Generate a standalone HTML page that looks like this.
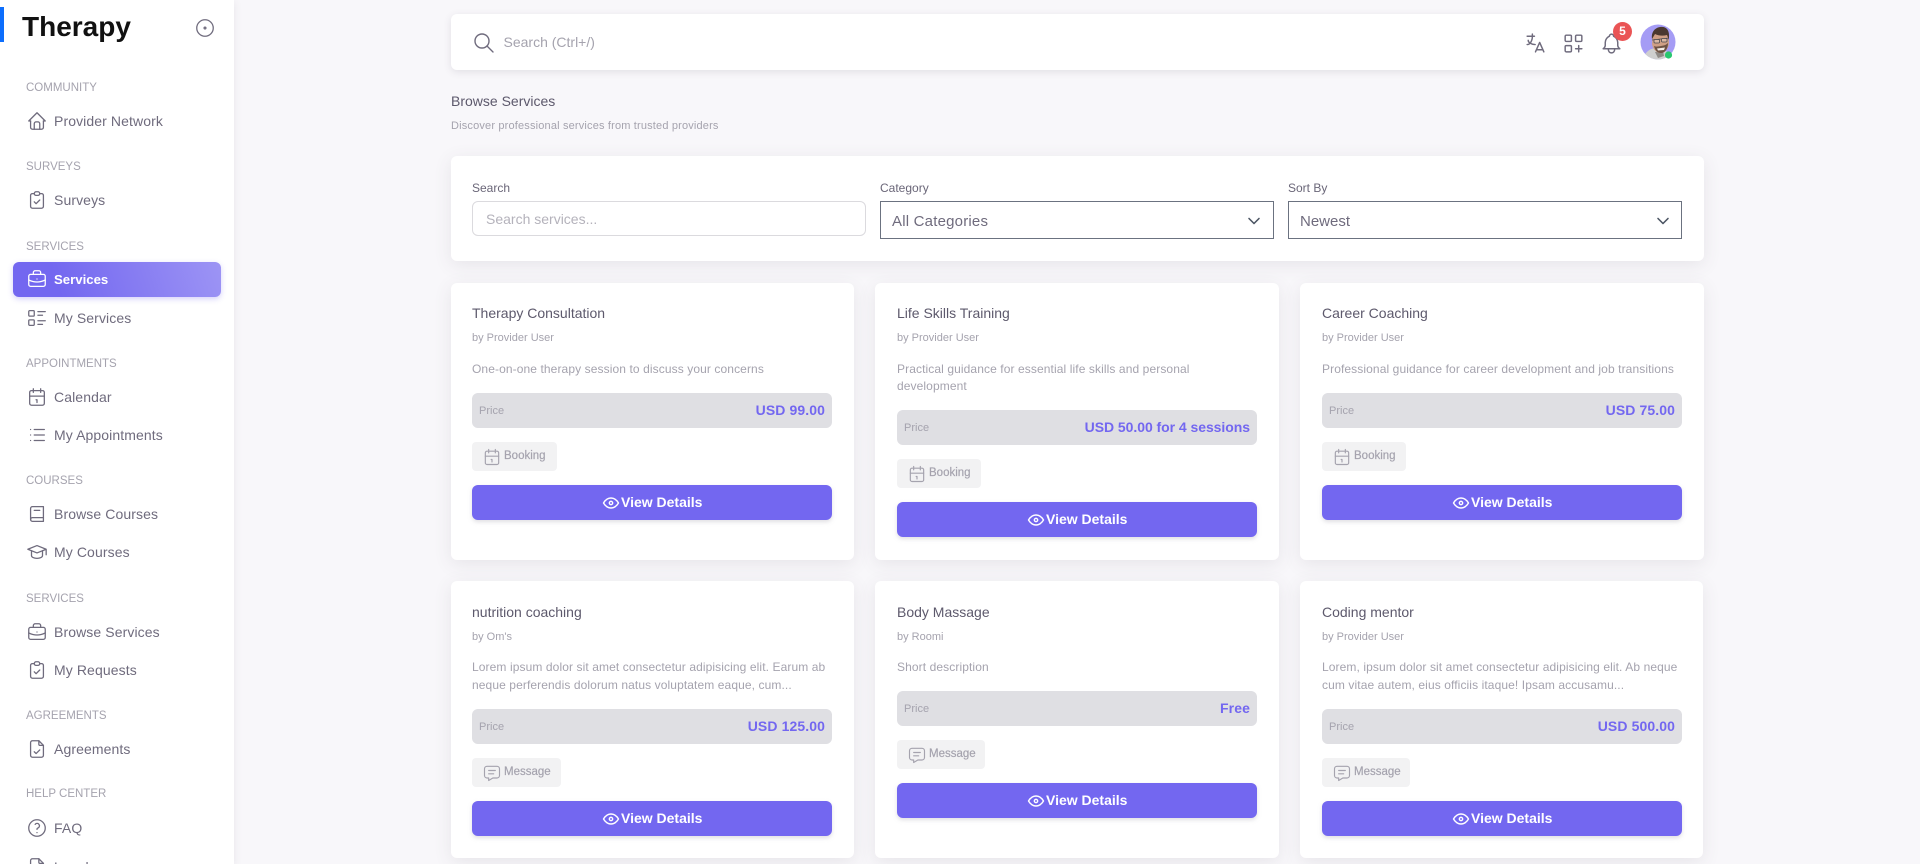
<!DOCTYPE html>
<html lang="en"><head><meta charset="utf-8"><title>Browse Services</title>
<style>
*{box-sizing:border-box}
html,body{margin:0;padding:0;width:1920px;height:864px;overflow:hidden;background:#f8f7fa;font-family:"Liberation Sans",sans-serif;color:#6f6b7d}
.a{position:absolute;white-space:nowrap;line-height:18px}
svg.i{position:absolute;fill:none;stroke:currentColor;stroke-width:1.4;stroke-linecap:round;stroke-linejoin:round}
#side{position:absolute;left:0;top:0;width:234px;height:864px;background:#fff;box-shadow:0 2px 8px rgba(75,70,92,.1);overflow:hidden}
.sec{left:26px;font-size:11.5px;color:#a5a3ae}
.nav{left:54px;font-size:14px;letter-spacing:.1px;color:#6f6b7d}
.box{position:absolute;background:#fff;border-radius:6px;box-shadow:0 4px 18px rgba(75,70,92,.1)}
.card{position:absolute;background:#fff;border-radius:6px;box-shadow:0 4px 18px rgba(75,70,92,.1);height:277px}
.tt{left:21px;top:21px;font-size:14px;color:#5d596c}
.by{left:21px;top:46px;font-size:11px;color:#a5a3ae}
.ds{left:21px;font-size:12px;letter-spacing:.1px;color:#a5a3ae}
.pr{position:absolute;left:21px;width:360px;height:35px;background:#dfdfe3;border-radius:6px}
.pr b{position:absolute;right:7px;top:8px;font-size:14px;line-height:18px;letter-spacing:.1px;color:#7367f0;white-space:nowrap}
.pr span{position:absolute;left:7px;top:9px;font-size:11px;line-height:18px;color:#a5a3ae}
.bd{position:absolute;left:21px;height:29px;background:#f2f2f3;border-radius:4px;color:#a5a3ae}
.bd span{position:absolute;left:32px;top:5px;font-size:11.5px;line-height:18px;white-space:nowrap;-webkit-text-stroke:.2px #a5a3ae}
.bd svg{left:10px;top:5px;width:20px;height:20px}
.btn{position:absolute;left:21px;width:360px;height:35px;background:#7367f0;border-radius:6px;box-shadow:0 2px 4px rgba(165,163,174,.35);color:#fff}
.btn svg{left:129px;top:8px;width:20px;height:20px;stroke-width:1.7}
.btn b{position:absolute;left:149px;top:8px;font-size:14px;line-height:18px;white-space:nowrap}
</style></head><body>
<svg width="0" height="0" style="position:absolute">
<symbol id="home" viewBox="0 0 24 24"><path d="M5 12h-2l9-9 9 9h-2"/><path d="M5 12v7a2 2 0 0 0 2 2h10a2 2 0 0 0 2-2v-7"/><path d="M9 21v-6a2 2 0 0 1 2-2h2a2 2 0 0 1 2 2v6"/></symbol>
<symbol id="clip" viewBox="0 0 24 24"><path d="M9 5h-2a2 2 0 0 0-2 2v12a2 2 0 0 0 2 2h10a2 2 0 0 0 2-2v-12a2 2 0 0 0-2-2h-2"/><path d="M9 5a2 2 0 0 1 2-2h2a2 2 0 0 1 2 2a2 2 0 0 1-2 2h-2a2 2 0 0 1-2-2z"/><path d="M9 14l2 2l4-4"/></symbol>
<symbol id="brief" viewBox="0 0 24 24"><path d="M3 9a2 2 0 0 1 2-2h14a2 2 0 0 1 2 2v9a2 2 0 0 1-2 2h-14a2 2 0 0 1-2-2z"/><path d="M8 7v-2a2 2 0 0 1 2-2h4a2 2 0 0 1 2 2v2"/><path d="M12 12v.01"/><path d="M3 13a20 20 0 0 0 18 0"/></symbol>
<symbol id="listd" viewBox="0 0 24 24"><path d="M13 5h8M13 9h5M13 15h8M13 19h5"/><path d="M3 5a1 1 0 0 1 1-1h4a1 1 0 0 1 1 1v4a1 1 0 0 1-1 1h-4a1 1 0 0 1-1-1z"/><path d="M3 15a1 1 0 0 1 1-1h4a1 1 0 0 1 1 1v4a1 1 0 0 1-1 1h-4a1 1 0 0 1-1-1z"/></symbol>
<symbol id="cal" viewBox="0 0 24 24"><path d="M4 7a2 2 0 0 1 2-2h12a2 2 0 0 1 2 2v12a2 2 0 0 1-2 2h-12a2 2 0 0 1-2-2z"/><path d="M16 3v4M8 3v4M4 11h16M11 15h1M12 15v3"/></symbol>
<symbol id="list" viewBox="0 0 24 24"><path d="M9 6h11M9 12h11M9 18h11M5 6v.01M5 12v.01M5 18v.01"/></symbol>
<symbol id="book" viewBox="0 0 24 24"><path d="M19 4v16h-12a2 2 0 0 1-2-2v-12a2 2 0 0 1 2-2h12z"/><path d="M19 16h-12a2 2 0 0 0-2 2"/><path d="M9 8h6"/></symbol>
<symbol id="school" viewBox="0 0 24 24"><path d="M22 9l-10-4l-10 4l10 4l10-4v6"/><path d="M6 10.6v5.4a6 3 0 0 0 12 0v-5.4"/></symbol>
<symbol id="fcheck" viewBox="0 0 24 24"><path d="M14 3v4a1 1 0 0 0 1 1h4"/><path d="M17 21h-10a2 2 0 0 1-2-2v-14a2 2 0 0 1 2-2h7l5 5v11a2 2 0 0 1-2 2z"/><path d="M9 15l2 2l4-4"/></symbol>
<symbol id="help" viewBox="0 0 24 24"><circle cx="12" cy="12" r="9"/><path d="M12 17v.01"/><path d="M12 13.5a1.5 1.5 0 0 1 1-1.5a2.6 2.6 0 1 0-3-4"/></symbol>
<symbol id="eye" viewBox="0 0 24 24"><path d="M10 12a2 2 0 1 0 4 0a2 2 0 0 0-4 0"/><path d="M21 12c-2.4 4-5.4 6-9 6c-3.6 0-6.6-2-9-6c2.4-4 5.4-6 9-6c3.6 0 6.6 2 9 6"/></symbol>
<symbol id="msg" viewBox="0 0 24 24"><path d="M8 9h8M8 13h6"/><path d="M18 4a3 3 0 0 1 3 3v8a3 3 0 0 1-3 3h-5l-5 3v-3h-2a3 3 0 0 1-3-3v-8a3 3 0 0 1 3-3h12z"/></symbol>
<symbol id="chev" viewBox="0 0 24 24"><path d="M6 9l6 6l6-6"/></symbol>
</svg>

<div id="side">
<div style="position:absolute;left:0;top:7px;width:4px;height:35px;background:#0d6efd"></div>
<div class="a" style="left:22px;top:11px;font-size:28px;line-height:32px;font-weight:700;color:#111">Therapy</div>
<svg class="i" style="left:193.5px;top:17px;width:22px;height:22px" viewBox="0 0 24 24"><circle cx="12" cy="12" r="1"/><circle cx="12" cy="12" r="9"/></svg>

<div class="a sec" style="top:79px">COMMUNITY</div>
<svg class="i" style="left:26px;top:110px;width:22px;height:22px"><use href="#home"/></svg><div class="a nav" style="top:112px">Provider Network</div>
<div class="a sec" style="top:158px">SURVEYS</div>
<svg class="i" style="left:26px;top:189px;width:22px;height:22px"><use href="#clip"/></svg><div class="a nav" style="top:191px">Surveys</div>
<div class="a sec" style="top:238px">SERVICES</div>
<div style="position:absolute;left:13px;top:262px;width:208px;height:35px;border-radius:6px;background:linear-gradient(72deg,#7367f0 22%,rgba(115,103,240,.7) 100%);box-shadow:0 2px 6px rgba(115,103,240,.3)"></div>
<svg class="i" style="left:26px;top:268px;width:22px;height:22px;color:#fff"><use href="#brief"/></svg><div class="a" style="left:54px;top:271px;font-size:13.2px;font-weight:700;color:#fff">Services</div>
<svg class="i" style="left:26px;top:307px;width:22px;height:22px"><use href="#listd"/></svg><div class="a nav" style="top:309px">My Services</div>
<div class="a sec" style="top:355px">APPOINTMENTS</div>
<svg class="i" style="left:26px;top:386px;width:22px;height:22px"><use href="#cal"/></svg><div class="a nav" style="top:388px">Calendar</div>
<svg class="i" style="left:26px;top:424px;width:22px;height:22px"><use href="#list"/></svg><div class="a nav" style="top:426px">My Appointments</div>
<div class="a sec" style="top:472px">COURSES</div>
<svg class="i" style="left:26px;top:503px;width:22px;height:22px"><use href="#book"/></svg><div class="a nav" style="top:505px">Browse Courses</div>
<svg class="i" style="left:26px;top:541px;width:22px;height:22px"><use href="#school"/></svg><div class="a nav" style="top:543px">My Courses</div>
<div class="a sec" style="top:590px">SERVICES</div>
<svg class="i" style="left:26px;top:621px;width:22px;height:22px"><use href="#brief"/></svg><div class="a nav" style="top:623px">Browse Services</div>
<svg class="i" style="left:26px;top:659px;width:22px;height:22px"><use href="#clip"/></svg><div class="a nav" style="top:661px">My Requests</div>
<div class="a sec" style="top:707px">AGREEMENTS</div>
<svg class="i" style="left:26px;top:738px;width:22px;height:22px"><use href="#fcheck"/></svg><div class="a nav" style="top:740px">Agreements</div>
<div class="a sec" style="top:785px">HELP CENTER</div>
<svg class="i" style="left:26px;top:817px;width:22px;height:22px"><use href="#help"/></svg><div class="a nav" style="top:819px">FAQ</div>
<svg class="i" style="left:26px;top:856px;width:22px;height:22px"><use href="#fcheck"/></svg><div class="a nav" style="top:858px">Legal</div>
</div>

<div class="box" style="left:451px;top:14px;width:1253px;height:56px;box-shadow:0 2px 8px rgba(75,70,92,.13)"></div>
<svg class="i" style="left:472px;top:31px;width:24px;height:24px" viewBox="0 0 24 24"><circle cx="10" cy="10" r="7"/><path d="M21 21l-6-6"/></svg>
<div class="a" style="left:503.5px;top:33px;font-size:14px;color:#a5a3ae">Search (Ctrl+/)</div>
<svg class="i" style="left:1523px;top:31px;width:25px;height:25px" viewBox="0 0 24 24"><path d="M4 5h7M9 3v2c0 4.418-2.239 8-5 8"/><path d="M5 9c0 2.144 2.952 3.908 6.7 4"/><path d="M12 20l4-9l4 9M19.1 18h-6.2"/></svg>
<svg class="i" style="left:1561px;top:31px;width:25px;height:25px" viewBox="0 0 24 24"><rect x="4" y="4" width="6" height="6" rx="1"/><rect x="14" y="4" width="6" height="6" rx="1"/><rect x="4" y="14" width="6" height="6" rx="1"/><path d="M14 17h6m-3-3v6"/></svg>
<svg class="i" style="left:1599px;top:31px;width:25px;height:25px" viewBox="0 0 24 24"><path d="M10 5a2 2 0 1 1 4 0a7 7 0 0 1 4 6v3a4 4 0 0 0 2 3h-16a4 4 0 0 0 2-3v-3a7 7 0 0 1 4-6"/><path d="M9 17v1a3 3 0 0 0 6 0v-1"/></svg>
<div style="position:absolute;left:1613px;top:22px;width:19px;height:19px;border-radius:50%;background:#ea5455;color:#fff;font-size:12px;font-weight:700;line-height:19px;text-align:center">5</div>
<svg style="position:absolute;left:1640px;top:24px" width="36" height="36" viewBox="0 0 36 36">
<defs><clipPath id="av"><circle cx="18" cy="18" r="17.5"/></clipPath></defs>
<g clip-path="url(#av)"><rect width="36" height="36" fill="#a59cf5"/>
<path d="M3 36c1-7 6-11 12-12l9 2c4 2 7 5 8 10z" fill="#cfcfcf"/>
<path d="M15 28l8-1 1 5-6 2z" fill="#8f8a86"/>
<path d="M13 8c4-4 13-4 15 2l1 8c0 6-4 11-8 11s-8-3-9-9z" fill="#cf9f85"/>
<path d="M12 15c-1-6 2-11 8-12s9 3 9 8l0 5-2-5c-4 1-8 1-12-1z" fill="#4a3830"/>
<path d="M14 22c2 1 4 .5 7 0s5-1 7-3c0 6-3 10-7 10s-6-3-7-7z" fill="#6d5345"/>
<path d="M17 24.5l8-1-1 2.5-6 .5z" fill="#f4ece6"/>
<path d="M12 16l17-2" stroke="#4a4a50" stroke-width=".8"/><rect x="14" y="15.5" width="5.5" height="3.5" rx="1" fill="#d9b8a4" stroke="#4a4a50" stroke-width=".8"/><rect x="21.5" y="14.5" width="5.5" height="3.5" rx="1" fill="#d9b8a4" stroke="#4a4a50" stroke-width=".8"/></g>
<circle cx="28.5" cy="31" r="3.6" fill="#28c76f"/></svg>

<div class="a" style="left:451px;top:92px;font-size:14px;color:#5d596c">Browse Services</div>
<div class="a" style="left:451px;top:117px;font-size:11px;letter-spacing:.17px;color:#a5a3ae">Discover professional services from trusted providers</div>

<div class="box" style="left:451px;top:156px;width:1253px;height:105px"></div>
<div class="a" style="left:472px;top:179px;font-size:12px;color:#6a6678">Search</div>
<div style="position:absolute;left:472px;top:201px;width:394px;height:35px;border:1px solid #dbdade;border-radius:6px;background:#fff"></div>
<div class="a" style="left:486px;top:210px;font-size:14px;color:#b4b2bb">Search services...</div>
<div class="a" style="left:880px;top:179px;font-size:12px;color:#6a6678">Category</div>
<div style="position:absolute;left:880px;top:201px;width:394px;height:38px;border:1px solid #6b7280;background:#fff"></div>
<div class="a" style="left:892px;top:213px;font-size:15px;letter-spacing:.2px;color:#6f6b7d">All Categories</div>
<svg class="i" style="left:1244px;top:211px;width:20px;height:20px;color:#4b5563;stroke-width:1.9"><use href="#chev"/></svg>
<div class="a" style="left:1288px;top:179px;font-size:12px;color:#6a6678">Sort By</div>
<div style="position:absolute;left:1288px;top:201px;width:394px;height:38px;border:1px solid #6b7280;background:#fff"></div>
<div class="a" style="left:1300px;top:213px;font-size:15px;color:#6f6b7d">Newest</div>
<svg class="i" style="left:1653px;top:211px;width:20px;height:20px;color:#4b5563;stroke-width:1.9"><use href="#chev"/></svg>

<!-- Row 1 -->
<div class="card" style="left:451px;top:283px;width:403px">
<div class="a tt">Therapy Consultation</div><div class="a by">by Provider User</div>
<div class="a ds" style="top:77px">One-on-one therapy session to discuss your concerns</div>
<div class="pr" style="top:110px"><span>Price</span><b>USD 99.00</b></div>
<div class="bd" style="top:159px;width:85px"><svg class="i"><use href="#cal"/></svg><span>Booking</span></div>
<div class="btn" style="top:202px"><svg class="i"><use href="#eye"/></svg><b>View Details</b></div>
</div>
<div class="card" style="left:875px;top:283px;width:404px">
<div class="a tt" style="left:22px">Life Skills Training</div><div class="a by" style="left:22px">by Provider User</div>
<div class="a ds" style="left:22px;top:77px">Practical guidance for essential life skills and personal</div>
<div class="a ds" style="left:22px;top:94px">development</div>
<div class="pr" style="left:22px;top:127px"><span>Price</span><b style="letter-spacing:-.05px">USD 50.00 for 4 sessions</b></div>
<div class="bd" style="left:22px;top:176px;width:84px"><svg class="i"><use href="#cal"/></svg><span>Booking</span></div>
<div class="btn" style="left:22px;top:219px"><svg class="i"><use href="#eye"/></svg><b>View Details</b></div>
</div>
<div class="card" style="left:1300px;top:283px;width:404px">
<div class="a tt" style="left:22px">Career Coaching</div><div class="a by" style="left:22px">by Provider User</div>
<div class="a ds" style="left:22px;top:77px">Professional guidance for career development and job transitions</div>
<div class="pr" style="left:22px;top:110px"><span>Price</span><b>USD 75.00</b></div>
<div class="bd" style="left:22px;top:159px;width:84px"><svg class="i"><use href="#cal"/></svg><span>Booking</span></div>
<div class="btn" style="left:22px;top:202px"><svg class="i"><use href="#eye"/></svg><b>View Details</b></div>
</div>

<!-- Row 2 -->
<div class="card" style="left:451px;top:581px;width:403px">
<div class="a tt" style="top:22px">nutrition coaching</div><div class="a by" style="top:47px">by Om's</div>
<div class="a ds" style="top:77px">Lorem ipsum dolor sit amet consectetur adipisicing elit. Earum ab</div>
<div class="a ds" style="top:95px">neque perferendis dolorum natus voluptatem eaque, cum...</div>
<div class="pr" style="top:128px"><span>Price</span><b>USD 125.00</b></div>
<div class="bd" style="top:177px;width:89px"><svg class="i"><use href="#msg"/></svg><span>Message</span></div>
<div class="btn" style="top:220px"><svg class="i"><use href="#eye"/></svg><b>View Details</b></div>
</div>
<div class="card" style="left:875px;top:581px;width:404px">
<div class="a tt" style="left:22px;top:22px">Body Massage</div><div class="a by" style="left:22px;top:47px">by Roomi</div>
<div class="a ds" style="left:22px;top:77px">Short description</div>
<div class="pr" style="left:22px;top:110px"><span>Price</span><b>Free</b></div>
<div class="bd" style="left:22px;top:159px;width:88px"><svg class="i"><use href="#msg"/></svg><span>Message</span></div>
<div class="btn" style="left:22px;top:202px"><svg class="i"><use href="#eye"/></svg><b>View Details</b></div>
</div>
<div class="card" style="left:1300px;top:581px;width:403px">
<div class="a tt" style="left:22px;top:22px">Coding mentor</div><div class="a by" style="left:22px;top:47px">by Provider User</div>
<div class="a ds" style="left:22px;top:77px">Lorem, ipsum dolor sit amet consectetur adipisicing elit. Ab neque</div>
<div class="a ds" style="left:22px;top:95px">cum vitae autem, eius officiis itaque! Ipsam accusamu...</div>
<div class="pr" style="left:22px;top:128px"><span>Price</span><b>USD 500.00</b></div>
<div class="bd" style="left:22px;top:177px;width:88px"><svg class="i"><use href="#msg"/></svg><span>Message</span></div>
<div class="btn" style="left:22px;top:220px"><svg class="i"><use href="#eye"/></svg><b>View Details</b></div>
</div>
</body></html>
